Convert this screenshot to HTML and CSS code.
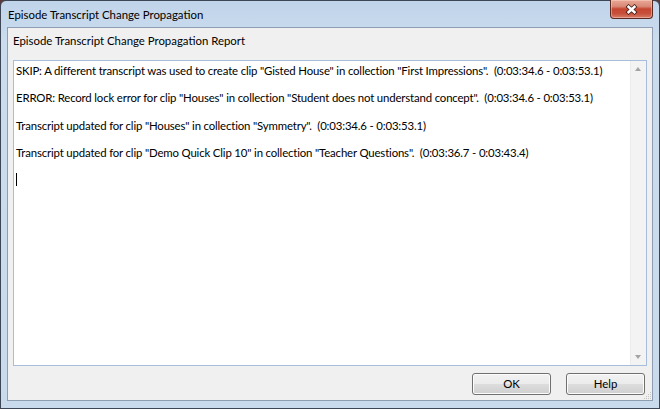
FILE: index.html
```html
<!DOCTYPE html>
<html>
<head>
<meta charset="utf-8">
<link rel="stylesheet" href="styles.css">
</head>
<body>
<div class="window">
  <div class="titlebar">
    <span class="title">Episode Transcript Change Propagation</span>
    <div class="close">
      <svg width="17" height="11" viewBox="0 0 17 11">
        <path d="M4 1.5 L13 9.5 M13 1.5 L4 9.5" stroke="#4a1f18" stroke-width="4.2" stroke-linecap="butt"/>
        <path d="M4.6 2 L12.4 9 M12.4 2 L4.6 9" stroke="#ffffff" stroke-width="2.4"/>
      </svg>
    </div>
  </div>
  <div class="client">
    <div class="caption">Episode Transcript Change Propagation Report</div>
    <div class="textbox">
      <div class="content">
        <p class="line">SKIP: A different transcript was used to create clip "Gisted House" in collection "First Impressions".&nbsp; (0:03:34.6 - 0:03:53.1)</p>
        <p class="line">ERROR: Record lock error for clip "Houses" in collection "Student does not understand concept".&nbsp; (0:03:34.6 - 0:03:53.1)</p>
        <p class="line">Transcript updated for clip "Houses" in collection "Symmetry".&nbsp; (0:03:34.6 - 0:03:53.1)</p>
        <p class="line">Transcript updated for clip "Demo Quick Clip 10" in collection "Teacher Questions".&nbsp; (0:03:36.7 - 0:03:43.4)</p>
        <div class="caret"></div>
      </div>
      <div class="scrollbar">
        <span class="arrow up"></span>
        <span class="arrow down"></span>
      </div>
    </div>
    <div class="buttons">
      <button class="btn">OK</button>
      <button class="btn">Help</button>
    </div>
    <div class="grip">
      <svg width="10" height="10" viewBox="0 0 10 10">
        <g fill="#c4c4c4">
          <rect x="8" y="2" width="1" height="1"/>
          <rect x="6" y="4" width="1" height="1"/><rect x="8" y="4" width="1" height="1"/>
          <rect x="4" y="6" width="1" height="1"/><rect x="6" y="6" width="1" height="1"/><rect x="8" y="6" width="1" height="1"/>
          <rect x="2" y="8" width="1" height="1"/><rect x="4" y="8" width="1" height="1"/><rect x="6" y="8" width="1" height="1"/><rect x="8" y="8" width="1" height="1"/>
        </g>
      </svg>
    </div>
  </div>
</div>
</body>
</html>
```

FILE: styles.css
```css
* { box-sizing: border-box; }
html, body {
  margin: 0;
  padding: 0;
  width: 660px;
  height: 409px;
  overflow: hidden;
  background: #5a3a3a;
}
.window {
  width: 660px;
  height: 409px;
  background: linear-gradient(#c0d4ea, #cbdcee 40px, #c9daed);
  border: 1px solid #3d4654;
  border-radius: 6px 6px 0 0;
  display: flex;
  flex-direction: column;
  padding: 0 6px 7px 6px;
  font-family: "Lato", "Noto Sans", sans-serif;
  font-size: 11.4px;
  color: #000;
}
.titlebar {
  height: 26px;
  display: flex;
  align-items: flex-start;
  position: relative;
}
.title {
  padding-left: 1px;
  margin-top: 6px;
  line-height: 16px;
  color: #000;
}
.close {
  position: absolute;
  right: 0;
  top: -1px;
  width: 43px;
  height: 19px;
  border: 1px solid #5a2a22;
  border-top: none;
  border-radius: 0 0 4px 4px;
  background: linear-gradient(#e9a895 0%, #d98a78 35%, #c64630 50%, #c7503a 75%, #d67c66 100%);
  box-shadow: inset 0 0 0 1px rgba(255,220,210,0.45);
  display: flex;
  align-items: center;
  justify-content: center;
}
.client {
  flex: 1;
  background: #f0f0f0;
  border: 1px solid #8e9db1;
  display: flex;
  flex-direction: column;
  padding: 0 5px;
  position: relative;
}
.caption {
  margin-top: 5px;
  line-height: 16px;
  height: 16px;
}
.textbox {
  margin-top: 11px;
  height: 306px;
  border: 1px solid #a6bedc;
  background: #fff;
  display: flex;
}
.content {
  flex: 1;
  padding: 2px 0 0 2px;
}
.line {
  margin: 0 0 11.4px 0;
  line-height: 16px;
  height: 16px;
  white-space: nowrap;
  letter-spacing: -0.16px;
}
.caret {
  width: 1px;
  height: 13px;
  background: #000;
  margin-top: 2px;
}
.scrollbar {
  width: 16px;
  background: #f3f3f3;
  border-left: 1px solid #ececec;
  position: relative;
}
.arrow {
  position: absolute;
  left: 4px;
  width: 0;
  height: 0;
  border-left: 3.5px solid transparent;
  border-right: 3.5px solid transparent;
}
.arrow.up {
  top: 6px;
  border-bottom: 4px solid #a3a3a3;
}
.arrow.down {
  bottom: 6px;
  border-top: 4px solid #a3a3a3;
}
.buttons {
  display: flex;
  justify-content: flex-end;
  gap: 15px;
  margin-top: 7px;
  padding-right: 2px;
}
.btn {
  width: 79px;
  height: 22px;
  border: 1px solid #707070;
  border-radius: 3px;
  background: linear-gradient(#f2f2f2 0%, #ebebeb 50%, #dddddd 50%, #cfcfcf 100%);
  box-shadow: inset 0 0 0 1px #fcfcfc;
  font-family: "Lato", "Noto Sans", sans-serif;
  font-size: 11.4px;
  color: #000;
  padding: 0;
  line-height: 18px;
}
.grip {
  position: absolute;
  right: 0;
  bottom: 0;
  width: 10px;
  height: 10px;
  line-height: 0;
}
```
